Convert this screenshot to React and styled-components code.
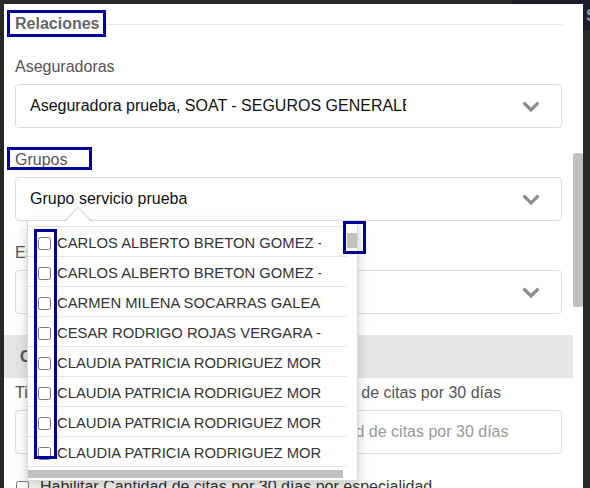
import React from 'react';
import styled, { createGlobalStyle } from 'styled-components';

const GlobalStyle = createGlobalStyle`
  html, body { margin: 0; padding: 0; }
  body { background: #282828; font-family: "Liberation Sans", Arial, sans-serif; }
  * { box-sizing: border-box; }
`;

const Page = styled.div`
  position: relative;
  width: 590px;
  height: 488px;
  overflow: hidden;
  background: #282828;
`;

const TopBar = styled.div`
  display: flex;
  justify-content: flex-end;
`;

const NavBlock = styled.div`
  width: 78px;
  height: 30px;
  background: #1c1c2a;
  color: #9a9aa6;
  font-weight: bold;
  font-size: 16px;
  line-height: 32px;
  padding-left: 74px;
  overflow: hidden;
  white-space: nowrap;
`;

const Modal = styled.div`
  position: absolute;
  top: 4px;
  left: 4px;
  right: 7px;
  bottom: 0;
  background: #fff;
  display: flex;
  overflow: hidden;
`;

const ModalBody = styled.div`
  flex: 1;
  min-width: 0;
  padding: 9px 11px 0;
`;

const ScrollTrack = styled.div`
  width: 10px;
  flex: none;
  padding-top: 149px;
  background: #fff;
`;

const ScrollThumb = styled.div`
  height: 154px;
  background: #c1c1c1;
  border-radius: 2px;
`;

const Legend = styled.div`
  display: flex;
  align-items: center;
  height: 22px;
  margin-bottom: 21px;
`;

const LegendText = styled.span`
  position: relative;
  font-weight: bold;
  font-size: 16px;
  line-height: 22px;
  color: #666;
  padding-right: 6px;
`;

const LegendRule = styled.div`
  flex: 1;
  height: 1px;
  background: #e8e8e8;
`;

const Highlight = styled.span`
  position: absolute;
  left: ${p => p.$l}px;
  top: ${p => p.$t}px;
  width: ${p => p.$w}px;
  height: ${p => p.$h}px;
  border: 3px solid #00009a;
  pointer-events: none;
  z-index: 5;
`;

const FormGroup = styled.div`
  margin-bottom: ${p => (p.$mb != null ? p.$mb : 21)}px;
`;

const Label = styled.label`
  position: relative;
  display: block;
  font-size: 16px;
  line-height: 22px;
  color: #555;
  margin-bottom: 6px;
`;

const SelectWrap = styled.div`
  position: relative;
`;

const Select = styled.div`
  display: flex;
  align-items: center;
  justify-content: space-between;
  height: 44px;
  border: 1px solid #dcdcdc;
  border-radius: 4px;
  padding: 0 21px 0 14px;
  background: #fff;
`;

const SelectText = styled.span`
  font-size: 16px;
  line-height: 22px;
  color: #111;
  white-space: nowrap;
  overflow: hidden;
  max-width: ${p => p.$max || 'none'};
`;

const Chevron = () => (
  <svg width="18" height="11" viewBox="0 0 18 11">
    <polyline points="1.6,1.6 9,9 16.4,1.6" fill="none" stroke="#8c8c8c" strokeWidth="3.2" />
  </svg>
);

const Dropdown = styled.div`
  position: absolute;
  top: 43px;
  left: 12px;
  width: 331px;
  height: 261px;
  background: #fff;
  border: 1px solid rgba(0, 0, 0, 0.15);
  box-shadow: 0 6px 12px rgba(0, 0, 0, 0.2);
  z-index: 10;
  display: grid;
  grid-template-columns: 319px 10px;
  grid-template-rows: 246px 13px;

  &::before {
    content: '';
    position: absolute;
    left: 36px;
    top: -15px;
    border-left: 14px solid transparent;
    border-right: 14px solid transparent;
    border-bottom: 15px solid rgba(0, 0, 0, 0.12);
  }
  &::after {
    content: '';
    position: absolute;
    left: 37px;
    top: -13px;
    border-left: 13px solid transparent;
    border-right: 13px solid transparent;
    border-bottom: 14px solid #fff;
  }
`;

const ItemList = styled.div`
  padding-top: 5px;
  overflow: hidden;
`;

const Rows = styled.div`
  border-top: 1px solid #e5e5e5;
`;

const Row = styled.div`
  display: flex;
  align-items: center;
  gap: 6px;
  height: 30px;
  padding: 3px 0 0 10px;
  border-bottom: 1px solid #e5e5e5;
`;

const Check = styled.input.attrs({ type: 'checkbox' })`
  margin: 0;
  width: 13px;
  height: 13px;
  flex: none;
`;

const ItemText = styled.span`
  width: 264px;
  flex: none;
  overflow: hidden;
  white-space: nowrap;
  font-size: 14.8px;
  line-height: 20px;
  color: #333;
`;

const VScroll = styled.div`
  padding-top: 12px;
`;

const VThumb = styled.div`
  height: 15px;
  background: #c1c1c1;
`;

const HScroll = styled.div`
  padding-top: 3px;
`;

const HThumb = styled.div`
  width: 315px;
  height: 8px;
  background: #c1c1c1;
`;

const Band = styled.div`
  display: flex;
  align-items: center;
  height: 43px;
  margin: 0 -11px 4px;
  padding-left: 16px;
  background: #e6e6e6;
  font-weight: bold;
  font-size: 16px;
  color: #555;
`;

const TextInput = styled.input`
  display: block;
  width: 100%;
  height: 44px;
  border: 1px solid #dcdcdc;
  border-radius: 4px;
  padding: 0 14px;
  font-family: "Liberation Sans", Arial, sans-serif;
  font-size: 16px;
  color: #333;
  outline: none;
  &::placeholder { color: #999; }
`;

const CheckRow = styled.label`
  display: flex;
  align-items: center;
  gap: 11px;
  margin-top: 22px;
  padding-left: 1px;
  font-size: 16px;
  line-height: 22px;
  color: #333;
`;

const items = [
  'CARLOS ALBERTO BRETON GOMEZ - MEDICINA GENERAL',
  'CARLOS ALBERTO BRETON GOMEZ - PEDIATRIA',
  'CARMEN MILENA SOCARRAS GALEANO',
  'CESAR RODRIGO ROJAS VERGARA - MEDICINA GENERAL',
  'CLAUDIA PATRICIA RODRIGUEZ MORENO',
  'CLAUDIA PATRICIA RODRIGUEZ MORENO',
  'CLAUDIA PATRICIA RODRIGUEZ MORENO',
  'CLAUDIA PATRICIA RODRIGUEZ MORENO',
];

export default function App() {
  return (
    <>
      <GlobalStyle />
      <Page>
        <TopBar>
          <NavBlock>Si</NavBlock>
        </TopBar>
        <Modal>
          <ModalBody>
            <Legend>
              <LegendText>
                Relaciones
                <Highlight $l={-8} $t={-3} $w={99} $h={27} />
              </LegendText>
              <LegendRule />
            </Legend>

            <FormGroup>
              <Label>Aseguradoras</Label>
              <Select>
                <SelectText $max="376px">Aseguradora prueba, SOAT - SEGUROS GENERALES SURAMERICANA</SelectText>
                <Chevron />
              </Select>
            </FormGroup>

            <FormGroup>
              <Label>
                Grupos
                <Highlight $l={-8} $t={-2} $w={85} $h={23} />
              </Label>
              <SelectWrap>
                <Select>
                  <SelectText>Grupo servicio prueba</SelectText>
                  <Chevron />
                </Select>
                <Dropdown>
                  <ItemList>
                    <Rows>
                      {items.map((t, i) => (
                        <Row key={i}>
                          <Check />
                          <ItemText>{t}</ItemText>
                        </Row>
                      ))}
                    </Rows>
                  </ItemList>
                  <VScroll>
                    <VThumb />
                  </VScroll>
                  <HScroll>
                    <HThumb />
                  </HScroll>
                  <Highlight $l={6} $t={8} $w={23} $h={230} />
                  <Highlight $l={315} $t={0} $w={23} $h={33} />
                </Dropdown>
              </SelectWrap>
            </FormGroup>

            <FormGroup>
              <Label>Especialidades</Label>
              <Select>
                <SelectText>Seleccione</SelectText>
                <Chevron />
              </Select>
            </FormGroup>

            <Band>Configuración de citas</Band>

            <FormGroup $mb={0}>
              <Label>Tipo de validación para la cantidad total máxima de citas por 30 días</Label>
              <TextInput placeholder="Ingrese aquí un número máximo de la cantidad de citas por 30 días" />
            </FormGroup>

            <CheckRow>
              <Check />
              Habilitar Cantidad de citas por 30 días por especialidad
            </CheckRow>
          </ModalBody>
          <ScrollTrack>
            <ScrollThumb />
          </ScrollTrack>
        </Modal>
      </Page>
    </>
  );
}
